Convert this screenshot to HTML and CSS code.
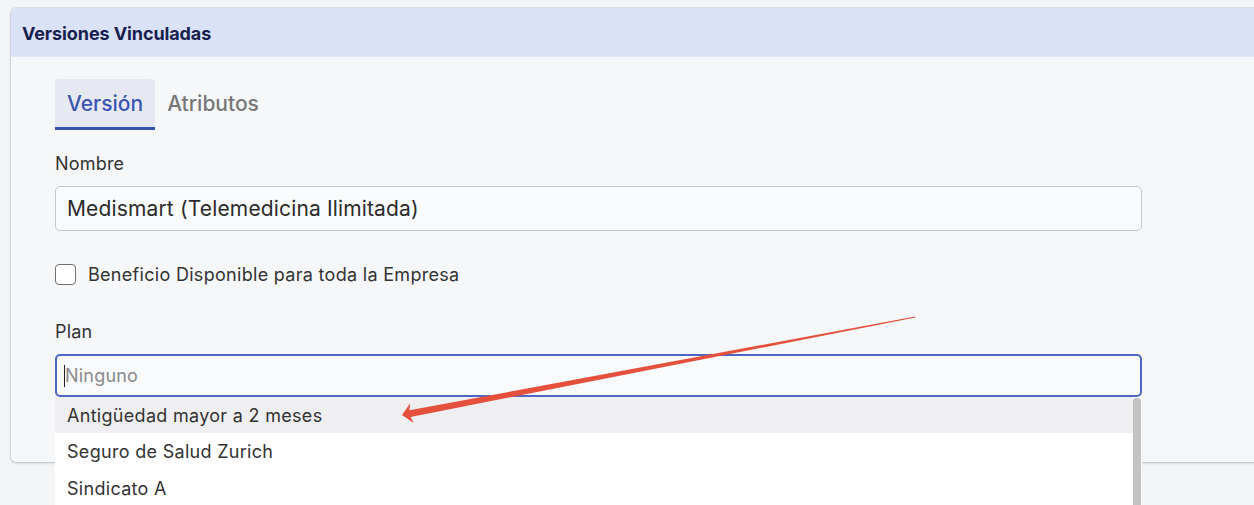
FILE: index.html
```html
<!DOCTYPE html>
<html lang="es">
<head>
<meta charset="utf-8">
<link rel="stylesheet" href="styles.css">
</head>
<body>
<div class="page">
  <section class="card">
    <header class="card-header">Versiones Vinculadas</header>
    <div class="card-body">
      <nav class="tabs">
        <span class="tab active">Versión</span>
        <span class="tab">Atributos</span>
      </nav>
      <label class="field-label">Nombre</label>
      <div class="input">Medismart (Telemedicina Ilimitada)</div>
      <label class="check-row"><span class="checkbox"></span><span>Beneficio Disponible para toda la Empresa</span></label>
      <label class="field-label plan-label">Plan</label>
      <div class="select-wrap">
        <div class="input focused"><span class="caret"></span><span class="placeholder">Ninguno</span></div>
        <ul class="dropdown">
          <li class="option hover">Antigüedad mayor a 2 meses</li>
          <li class="option">Seguro de Salud Zurich</li>
          <li class="option">Sindicato A</li>
          <span class="scrollbar"></span>
        </ul>
      </div>
    </div>
  </section>
  <svg class="arrow" width="1254" height="505" viewBox="0 0 1254 505">
    <polygon fill="#e5503c" points="402,415 410.2,403.2 409.4,410.3 915.2,316.6 915.4,317.4 410.6,416.9 413.7,422.9"/>
  </svg>
</div>
</body>
</html>
```
FILE: styles.css
```css
* { box-sizing: border-box; }
html, body { margin: 0; padding: 0; }
body {
  background: #f4f5f6;
  font-family: Inter, "Noto Sans", sans-serif;
  color: #333;
  width: 1254px;
  height: 505px;
  overflow: hidden;
}
.page {
  position: relative;
  width: 1254px;
  height: 505px;
  padding: 8px 0 0 11px;
}
.card {
  width: 1270px;
  height: 454px;
  background: #f6f7f9;
  border-radius: 5px;
  box-shadow: 0 1px 3px rgba(0,0,0,0.18), 0 0 0 1px rgba(200,205,225,0.5);
}
.card-header {
  height: 49px;
  background: #dae2f8;
  border-radius: 5px 0 0 0;
  display: flex;
  align-items: center;
  padding: 2px 0 0 11px;
  font-weight: 700;
  font-size: 18px;
  letter-spacing: -0.1px;
  color: #17214f;
  border-bottom: 1px solid #e3e7f3;
}
.card-body {
  padding: 22px 0 0 44px;
}
.tabs {
  display: flex;
  height: 51px;
}
.tab {
  display: flex;
  align-items: center;
  padding: 0 12px 2px 12px;
  font-size: 21px;
  color: #777;
  font-weight: 500;
}
.tab.active {
  background: #e6e9f2;
  color: #3a55b2;
  border-radius: 4px 4px 0 0;
  border-bottom: 3px solid #3552b0;
  padding-bottom: 0;
}
.field-label {
  display: block;
  font-size: 18px;
  letter-spacing: 0.2px;
  line-height: 22px;
  margin-top: 23px;
  color: #333;
}
.input {
  margin-top: 11px;
  width: 1087px;
  height: 45px;
  border: 1px solid #c4c5c9;
  border-radius: 5px;
  background: #fafbfc;
  display: flex;
  align-items: center;
  padding-left: 11px;
  font-size: 21px;
  letter-spacing: 0.15px;
  color: #2b2b2b;
}
.check-row {
  display: flex;
  align-items: center;
  gap: 12px;
  margin-top: 32px;
  font-size: 18px;
  letter-spacing: 0.3px;
  color: #333;
  height: 22px;
}
.checkbox {
  width: 21px;
  height: 21px;
  border: 1.5px solid #707070;
  border-radius: 4px;
  background: #fff;
}
.plan-label { margin-top: 36px; }
.select-wrap { position: relative; }
.input.focused {
  height: 43px;
  border: 2px solid #4e66c6;
  background: #f9fafc;
  padding-left: 7px;
  font-size: 18px;
  letter-spacing: 0.2px;
}
.caret {
  width: 1px;
  height: 22px;
  background: #222;
}
.placeholder { color: #8a8a8a; }
.dropdown {
  position: absolute;
  left: 0;
  top: 43px;
  width: 1087px;
  margin: 0;
  padding: 0;
  list-style: none;
  background: #fff;
  z-index: 2;
}
.option {
  height: 37px;
  display: flex;
  align-items: center;
  padding-left: 12px;
  font-size: 18px;
  letter-spacing: 0.3px;
  color: #333;
  margin-right: 9px;
}
.option.hover { background: #efeff2; height: 36px; }
.scrollbar {
  position: absolute;
  right: 1px;
  top: 1px;
  width: 8px;
  height: 140px;
  background: #c3c3c3;
  border-radius: 3px 3px 0 0;
}
.arrow {
  position: absolute;
  left: 0;
  top: 0;
  pointer-events: none;
  z-index: 5;
}
```
